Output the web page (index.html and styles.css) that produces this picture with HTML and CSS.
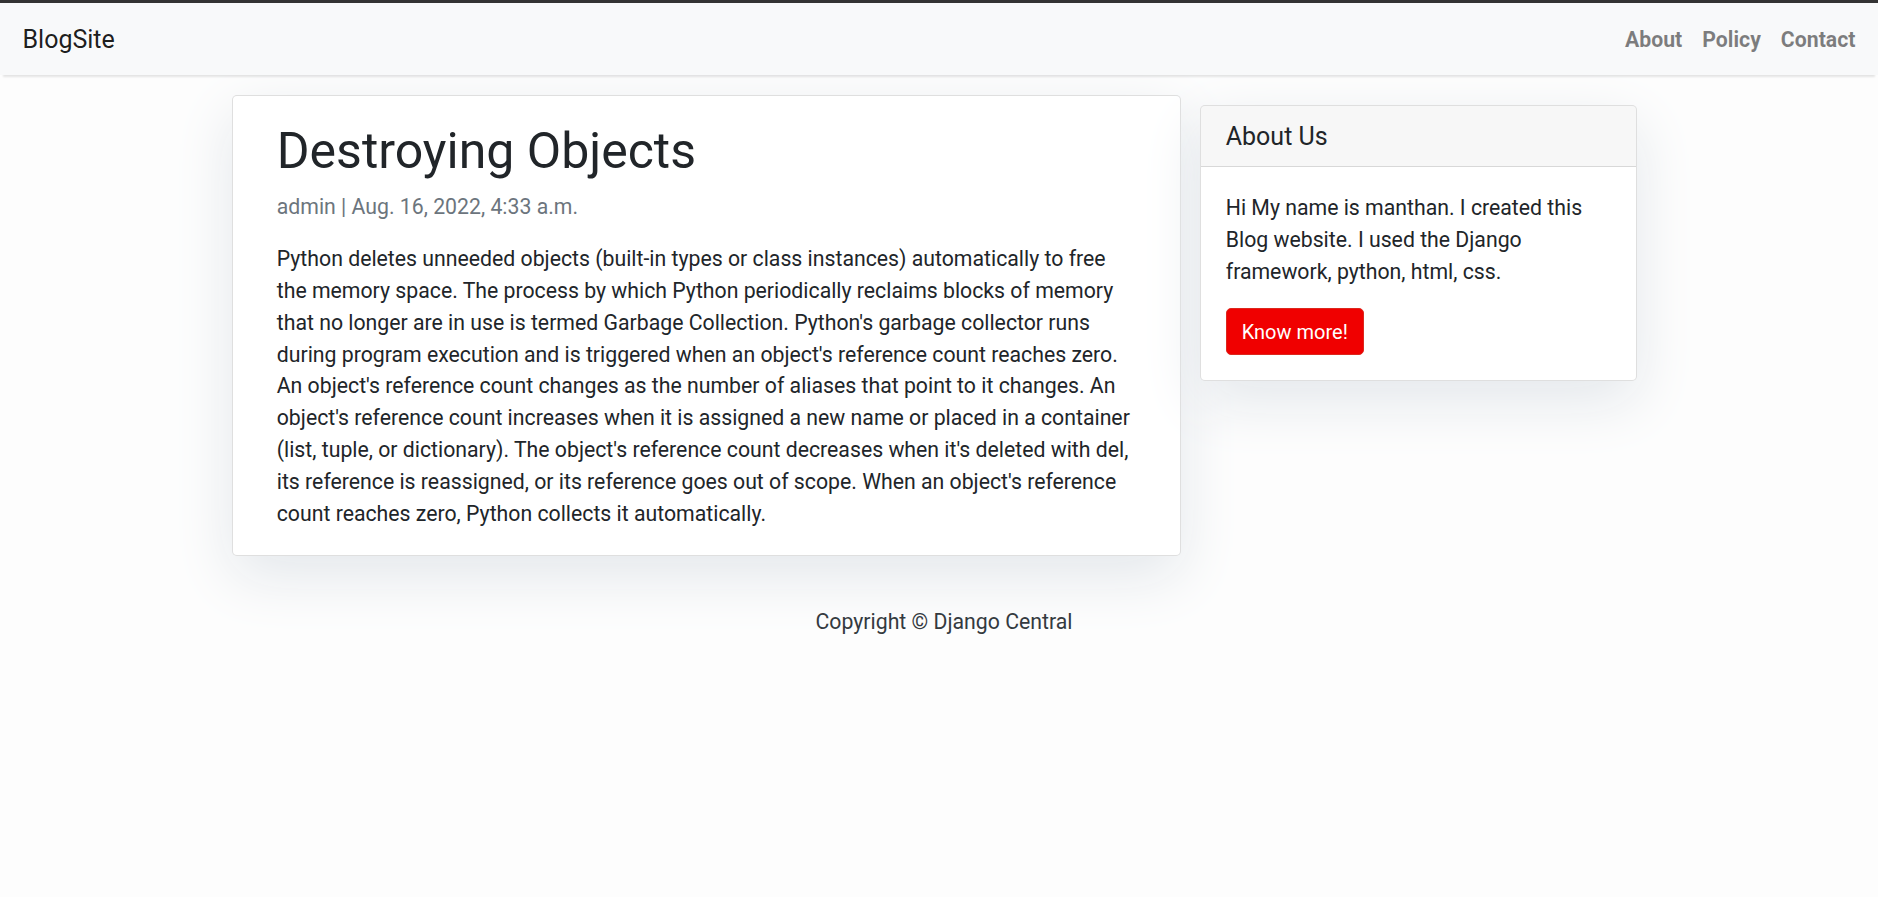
FILE: index.html
```html
<!DOCTYPE html>
<html lang="en">
<head>
<meta charset="utf-8">
<title>Destroying Objects</title>
<link rel="stylesheet" href="styles.css">
</head>
<body>
<nav class="navbar">
  <a class="brand" href="#">BlogSite</a>
  <ul class="nav">
    <li><a class="nav-link" href="#">About</a></li>
    <li><a class="nav-link" href="#">Policy</a></li>
    <li><a class="nav-link" href="#">Contact</a></li>
  </ul>
</nav>
<div class="page">
  <div class="container">
    <article class="post card">
      <div class="card-body">
        <h1 class="post-title">Destroying Objects</h1>
        <p class="meta">admin | Aug. 16, 2022, 4:33 a.m.</p>
        <p class="card-text last">Python deletes unneeded objects (built-in types or class instances) automatically to free the memory space. The process by which Python periodically reclaims blocks of memory that no longer are in use is termed Garbage Collection. Python's garbage collector runs during program execution and is triggered when an object's reference count reaches zero. An object's reference count changes as the number of aliases that point to it changes. An object's reference count increases when it is assigned a new name or placed in a container (list, tuple, or dictionary). The object's reference count decreases when it's deleted with del, its reference is reassigned, or its reference goes out of scope. When an object's reference count reaches zero, Python collects it automatically.</p>
      </div>
    </article>
    <aside class="sidebar">
      <div class="card side-card">
        <h5 class="card-header">About Us</h5>
        <div class="card-body">
          <p class="card-text">Hi My name is manthan. I created this Blog website. I used the Django framework, python, html, css.</p>
          <a class="btn" href="#">Know more!</a>
        </div>
      </div>
    </aside>
  </div>
</div>
<footer class="page footer">
  <p class="copy">Copyright &copy; Django Central</p>
</footer>
</body>
</html>
```

FILE: styles.css
```css
* { box-sizing: border-box; }

html, body { margin: 0; padding: 0; }

body {
  font-family: Roboto, "Liberation Sans", Arial, sans-serif;
  font-size: 21.25px;
  line-height: 1.5;
  color: #212529;
  background-color: #fdfdfd;
}

a { text-decoration: none; }

.navbar {
  height: 75px;
  border-top: 3px solid #333333;
  background-color: #f8f9fa;
  box-shadow: 0 5px 2px -3px rgba(0, 0, 0, 0.1);
  display: flex;
  align-items: center;
  justify-content: space-between;
  padding: 2px 22.5px 0;
  position: relative;
  z-index: 2;
}

.brand {
  font-size: 25px;
  line-height: 37.5px;
  color: rgba(0, 0, 0, 0.9);
}

.nav {
  list-style: none;
  margin: 0 -10px 0 0;
  padding: 0;
  display: flex;
}

.nav-link {
  display: block;
  padding: 0 10px;
  font-weight: 700;
  color: rgba(0, 0, 0, 0.5);
  line-height: 31.875px;
}

.page {
  padding-left: 10px;
}

.container {
  width: 1424px;
  margin: 0 auto;
  display: flex;
  align-items: flex-start;
}

.card {
  background: #fff;
  border: 1px solid rgba(0, 0, 0, 0.125);
  border-radius: 5px;
  box-shadow: 0 20px 60px #e3e7eb;
}

.post {
  width: 949px;
  margin: 20px 0 30px;
  padding: 0 18.75px;
}

.card-body {
  padding: 25px;
}

.post-title {
  font-size: 50px;
  font-weight: 400;
  line-height: 1.2;
  margin: 0 0 10px;
}

.meta {
  color: #6c757d;
  margin: 0 0 20px;
}

.card-text {
  margin: 0 0 20px;
}

.card-text.last {
  margin-bottom: 0;
}

.sidebar {
  width: 475px;
  padding: 0 18.75px;
}

.side-card {
  margin: 30px 0;
}

.card-header {
  margin: 0;
  padding: 16px 25px 14px;
  font-size: 25px;
  font-weight: 400;
  line-height: 1.2;
  background-color: rgba(0, 0, 0, 0.03);
  border-bottom: 1px solid rgba(0, 0, 0, 0.125);
  border-radius: 4px 4px 0 0;
}

.btn {
  display: inline-block;
  padding: 8px 15px 7px;
  font-size: 20px;
  line-height: 1.5;
  color: #fff;
  background-color: #f00000;
  border: 1px solid #dc281e;
  border-radius: 5px;
}

.footer {
  padding-top: 20px;
  padding-bottom: 20px;
}

.copy {
  margin: 0;
  text-align: center;
  color: #343a40;
}
```
